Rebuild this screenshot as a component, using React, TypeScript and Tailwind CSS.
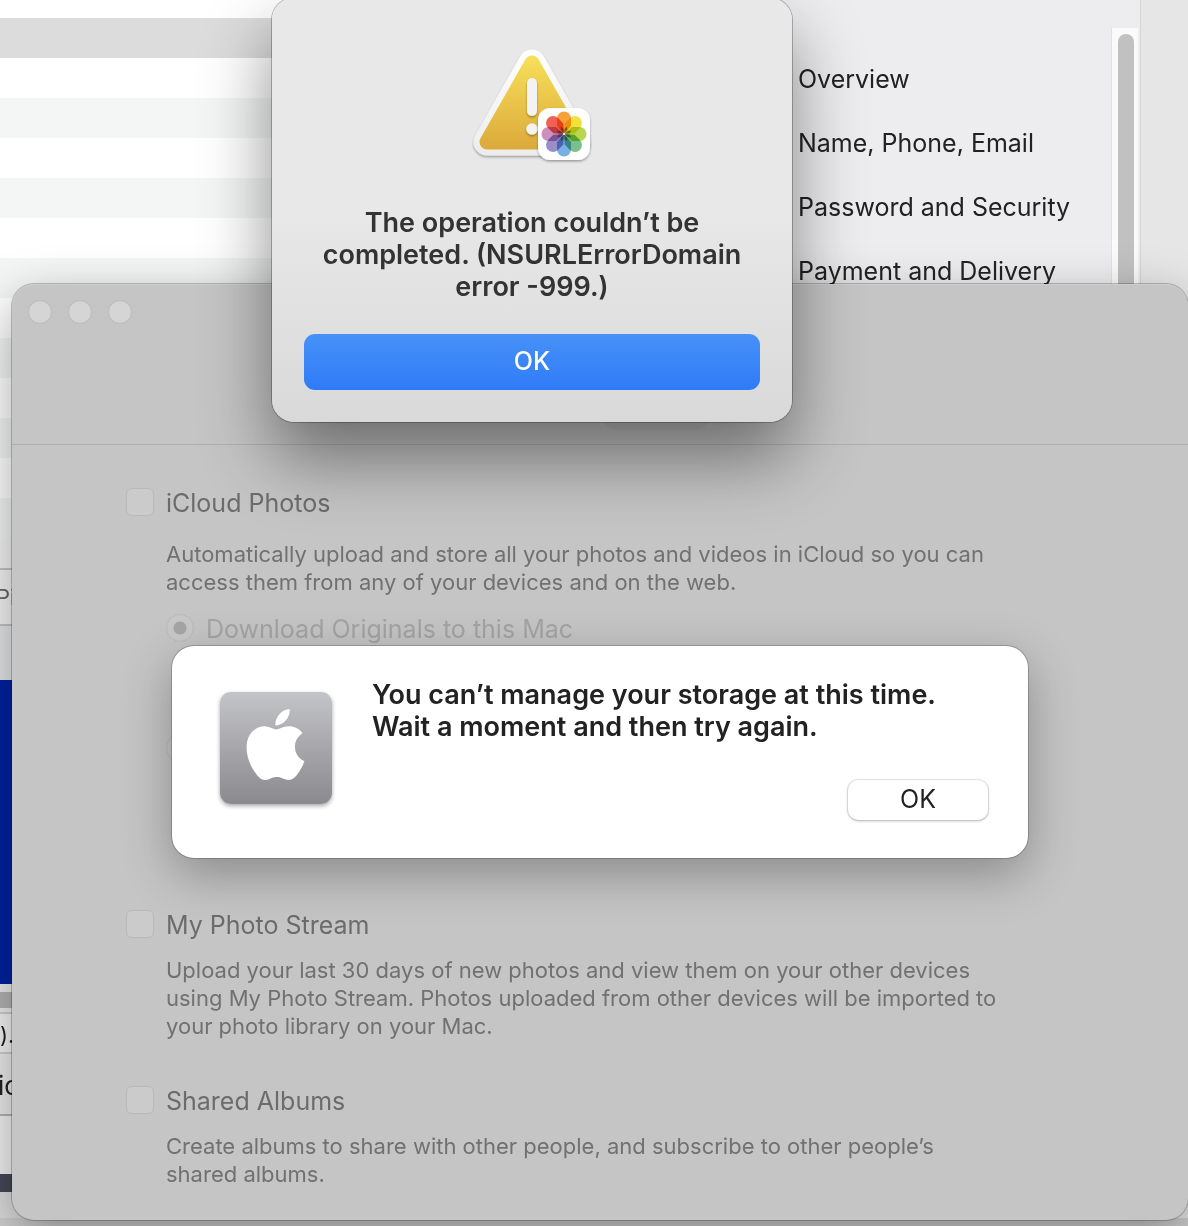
import type { ReactNode } from "react";
import { SiApple } from "react-icons/si";

const NAV_ITEMS = ["Overview", "Name, Phone, Email", "Password and Security", "Payment and Delivery"];

const PETALS = [
  { angle: 0, color: "#f7941e" },
  { angle: 45, color: "#f0dc20" },
  { angle: 90, color: "#aed136" },
  { angle: 135, color: "#67b77c" },
  { angle: 180, color: "#64a5e0" },
  { angle: 225, color: "#8b7fc0" },
  { angle: 270, color: "#c581b5" },
  { angle: 315, color: "#ee4a3b" },
];

const WarningIcon = () => (
  <svg className="h-[120px] w-[128px]" viewBox="468 44 128 120" aria-hidden="true">
    <defs>
      <linearGradient id="warnFill" gradientUnits="userSpaceOnUse" x1="0" y1="55" x2="0" y2="150">
        <stop offset="0" stopColor="#f8e05a" />
        <stop offset="1" stopColor="#dba93a" />
      </linearGradient>
      <linearGradient id="warnEdge" gradientUnits="userSpaceOnUse" x1="0" y1="50" x2="0" y2="156">
        <stop offset="0" stopColor="#ffffff" />
        <stop offset="1" stopColor="#ececec" />
      </linearGradient>
      <filter id="soft" x="-20%" y="-20%" width="140%" height="150%">
        <feDropShadow dx="0" dy="1.5" stdDeviation="1.2" floodColor="#000" floodOpacity="0.35" />
      </filter>
    </defs>
    <path
      d="M532 63 L577 142 H487 Z"
      fill="url(#warnEdge)"
      stroke="url(#warnEdge)"
      strokeWidth="27"
      strokeLinejoin="round"
      filter="url(#soft)"
    />
    <path
      d="M532 63 L577 142 H487 Z"
      fill="url(#warnFill)"
      stroke="url(#warnFill)"
      strokeWidth="15"
      strokeLinejoin="round"
    />
    <g fill="#f3f3f3" filter="url(#soft)">
      <rect x="527" y="78" width="10" height="38" rx="5" />
      <circle cx="532" cy="129" r="5.8" />
    </g>
    <rect x="538" y="108" width="52" height="52" rx="12" fill="#fff" filter="url(#soft)" />
    <g style={{ isolation: "isolate" }}>
      {PETALS.map(({ angle, color }) => (
        <path
          key={angle}
          className="mix-blend-multiply"
          d="M557 118.5 A7 7 0 0 1 571 118.5 V126 L564.5 133.5 H563.5 L557 126 Z"
          fill={color}
          fillOpacity="0.88"
          transform={`rotate(${angle} 564 134)`}
        />
      ))}
      {PETALS.map(({ angle }) => (
        <path
          key={angle}
          d="M564 133 L562.5 129 L564 126 L565.5 129 Z"
          fill="#222"
          fillOpacity="0.5"
          transform={`rotate(${angle + 22.5} 564 134)`}
        />
      ))}
      <circle cx="564" cy="134" r="1" fill="#fff" />
    </g>
  </svg>
);

const BackgroundList = () => (
  <div className="mb-2 flex w-1/2 flex-col bg-white">
    <div className="h-[18px]" />
    <div className="h-10 bg-[#dcdcdc]" />
    {Array.from({ length: 12 }, (_, i) => (
      <div key={i} className="h-10 bg-white nth-[even]:bg-[#f4f6f5]" />
    ))}
    <div className="h-[30px] bg-[#f4f4f4]" />
    <div className="h-[58px] border-y-2 border-[#c4c4c4] bg-[#f4f4f4] text-[22px] leading-[54px] text-[#666]">
      <span className="-ml-1">Pi</span>
    </div>
    <div className="h-[54px] bg-[#e4e6e7]" />
    <div className="h-[304px] bg-[#0022a0]" />
    <div className="h-2 bg-[#ededed]" />
    <div className="h-4 bg-[#b4b4b4]" />
    <div className="h-1 bg-[#ededed]" />
    <div className="h-[42px] border-y-2 border-[#cfcfcf] bg-[#f4f4f4] text-[22px] leading-[42px] text-[#222]">).</div>
    <div className="h-[62px] border-b-2 border-[#b4b4b4] bg-[#ececec] text-[26px] leading-16 text-[#222]">
      <span className="-ml-0.5">ic</span>
    </div>
    <div className="h-[58px] bg-[#f2f2f2]" />
    <div className="h-[18px] bg-[#454858]" />
    <div className="flex-1 bg-[#dcdcdc]" />
  </div>
);

const AccountPanel = () => (
  <div className="mb-2 flex w-1/2 bg-[#ededef]">
    <nav className="flex-1 pt-[47px] pl-[204px]">
      <ul>
        {NAV_ITEMS.map((item) => (
          <li key={item} className="h-16">
            <a href="#" className="text-[25px] leading-16 whitespace-nowrap text-[#222]">
              {item}
            </a>
          </li>
        ))}
      </ul>
    </nav>
    <div className="mt-7 mr-0.5 w-[27px] border-l border-[#e2e2e2] bg-[#fafafa] pt-1.5 pr-1 pl-1.5">
      <div className="h-full w-4 rounded-full bg-[#c1c1c1]" />
    </div>
    <div className="w-12 border-l border-[#d6d6d6] bg-[#e6e6e6]" />
  </div>
);

interface OptionProps {
  id: string;
  label: string;
  className?: string;
  children: ReactNode;
}

const Option = ({ id, label, className, children }: OptionProps) => (
  <section className={className}>
    <div className="flex h-7 items-center gap-3">
      <input
        id={id}
        type="checkbox"
        className="size-7 appearance-none rounded-md border border-[#b9b9b9] bg-[#cbcbcb]"
      />
      <label htmlFor={id} className="pt-0.5 text-[25px] leading-7 text-[#6c6c6c]">
        {label}
      </label>
    </div>
    {children}
  </section>
);

const Description = ({ children, className }: { children: ReactNode; className: string }) => (
  <p className={`ml-10 text-[22px] leading-7 text-[#717171] ${className}`}>{children}</p>
);

const PreferencesWindow = () => (
  <main className="absolute top-[284px] right-0 bottom-1.5 left-3 rounded-[22px] bg-[#c5c5c5] shadow-[0_0_0_1px_rgba(0,0,0,0.22),0_16px_50px_rgba(0,0,0,0.35)] inset-shadow-[0_1px_0_#cdcdcd]">
    <header className="flex h-[161px] flex-col justify-between rounded-t-[22px] border-b border-[#b0b0b0] px-4 pt-4 pb-3.5">
      <div className="flex gap-4">
        {["Close", "Minimize", "Zoom"].map((name) => (
          <button key={name} aria-label={name} className="size-6 rounded-full border border-[#b9b9b9] bg-[#d5d5d5]" />
        ))}
      </div>
      <div className="flex justify-center gap-2">
        <button aria-label="General" className="h-20 w-26 rounded-xl" />
        <button aria-label="iCloud" className="h-20 w-26 rounded-xl bg-[#bebebe]" />
      </div>
    </header>
    <div className="px-[114px] pt-[43px]">
      <Option id="icloud" label="iCloud Photos" className="h-[422px]">
        <Description className="mt-6 mb-[18px]">
          Automatically upload and store all your photos and videos in iCloud so you can
          <br />
          access them from any of your devices and on the web.
        </Description>
        <div className="ml-10 flex h-7 items-center gap-3">
          <input
            id="download"
            type="radio"
            name="storage"
            defaultChecked
            className="size-7 appearance-none rounded-full border border-[#bababa] bg-[#c8c8c8] checked:bg-[radial-gradient(circle,#a5a5a5_6px,#c8c8c8_7px)]"
          />
          <label htmlFor="download" className="pt-0.5 text-[25px] leading-7 text-[#a4a4a4]">
            Download Originals to this Mac
          </label>
        </div>
        <input
          type="radio"
          name="storage"
          aria-label="Optimize Mac Storage"
          className="mt-[92px] ml-10 block size-7 appearance-none rounded-full border border-[#bababa] bg-[#c8c8c8]"
        />
      </Option>
      <Option id="stream" label="My Photo Stream" className="h-44">
        <Description className="mt-[18px]">
          Upload your last 30 days of new photos and view them on your other devices
          <br />
          using My Photo Stream. Photos uploaded from other devices will be imported to
          <br />
          your photo library on your Mac.
        </Description>
      </Option>
      <Option id="shared" label="Shared Albums">
        <Description className="mt-[18px]">
          Create albums to share with other people, and subscribe to other people’s
          <br />
          shared albums.
        </Description>
      </Option>
    </div>
    <StorageAlert />
  </main>
);

const StorageAlert = () => (
  <div
    role="alertdialog"
    aria-labelledby="storage-title"
    className="absolute inset-x-40 top-[362px] flex rounded-[22px] bg-white pt-[33px] pr-10 pb-[38px] pl-12 shadow-[0_0_0_1px_rgba(0,0,0,0.2),0_16px_50px_rgba(0,0,0,0.3)]"
  >
    <div className="mt-[13px] flex size-28 shrink-0 items-center justify-center rounded-[11px] bg-linear-to-b from-[#c3c4c8] to-[#8b8a8f] shadow-[0_2px_4px_rgba(0,0,0,0.35)]">
      <SiApple className="mr-0.5 mb-2 size-[71px] text-white" aria-hidden="true" />
    </div>
    <div className="ml-10 flex flex-1 flex-col">
      <h2 id="storage-title" className="text-[27px] leading-8 font-semibold text-[#222]">
        You can’t manage your storage at this time.
        <br />
        Wait a moment and then try again.
      </h2>
      <button className="mt-[37px] h-10 w-[140px] self-end rounded-[10px] bg-white pb-0.5 text-[25px] leading-[38px] text-[#222] shadow-[0_0_0_1px_rgba(0,0,0,0.08),0_1px_3px_rgba(0,0,0,0.25)]">
        OK
      </button>
    </div>
  </div>
);

const ErrorAlert = () => (
  <div
    role="alertdialog"
    aria-labelledby="error-title"
    className="absolute -top-0.5 left-[272px] flex w-[520px] flex-col items-center rounded-[22px] bg-linear-to-b from-[#e8e8e8] from-50% to-[#d9d9d9] px-8 pt-[46px] pb-8 shadow-[0_0_0_1px_rgba(0,0,0,0.25),0_36px_70px_rgba(0,0,0,0.45)]"
  >
    <WarningIcon />
    <h2 id="error-title" className="mt-[43px] text-center text-[27px] leading-8 font-semibold text-[#333]">
      The operation couldn’t be
      <br />
      completed. (NSURLErrorDomain
      <br />
      error -999.)
    </h2>
    <button className="mt-[31px] h-14 w-full rounded-[11px] bg-linear-to-b from-[#4791f8] to-[#2f7bf7] text-[25px] font-medium text-white">
      OK
    </button>
  </div>
);

export default function App() {
  return (
    <div className="relative flex min-h-screen overflow-hidden bg-[#cfcfcf] font-['Inter','Liberation_Sans',sans-serif]">
      <BackgroundList />
      <AccountPanel />
      <PreferencesWindow />
      <ErrorAlert />
    </div>
  );
}
